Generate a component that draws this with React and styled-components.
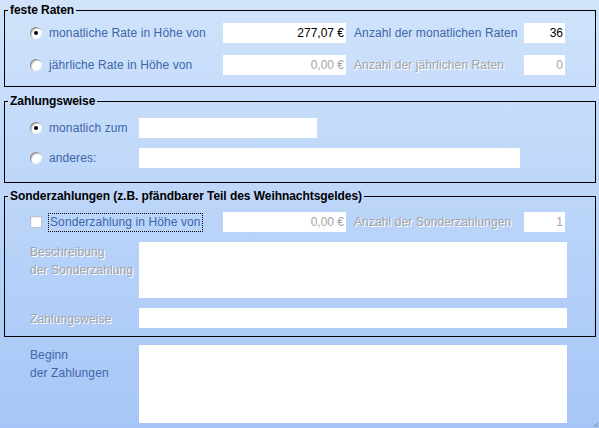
import styled, { createGlobalStyle } from "styled-components";

const Global = createGlobalStyle`
  html, body { margin: 0; padding: 0; }
  body { font-family: "Liberation Sans", Arial, sans-serif; font-size: 12px; }
`;

const Page = styled.div`
  position: relative;
  box-sizing: border-box;
  width: 599px;
  height: 428px;
  padding: 3px 3px 0 4px;
  background: linear-gradient(#d0e3fb, #a6c6f7);
  overflow: hidden;
`;

const Group = styled.fieldset`
  margin: ${(p) => p.$top || 0}px 0 0 0;
  padding: ${(p) => p.$pt}px 0 ${(p) => p.$pb}px 0;
  border: 1px solid #000;
  min-width: 0;
`;

const Legend = styled.legend`
  margin-left: 3px;
  padding: 0 2px;
  font-weight: bold;
  font-size: 12px;
  line-height: 14px;
  letter-spacing: -0.05px;
  color: #000;
`;

const Body = styled.div`
  display: flex;
  flex-direction: column;
  gap: ${(p) => p.$gap}px;
  padding-left: 25px;
`;

const Row = styled.div`
  display: flex;
  align-items: ${(p) => (p.$top ? "flex-start" : "center")};
  height: ${(p) => p.$h || 20}px;
`;

const Option = styled.label`
  display: flex;
  align-items: center;
  width: ${(p) => p.$w}px;
  flex: none;
  color: #4065aa;
`;

const Radio = styled.span`
  position: relative;
  box-sizing: border-box;
  width: 12px;
  height: 12px;
  margin-right: 7px;
  border-radius: 50%;
  background: #fff;
  box-shadow: inset 1px 1px 0 #8a8a8a, inset 2px 2px 0 #d8d8d8, inset -1px -1px 0 #f2f2f2;
  &::after {
    content: "";
    display: ${(p) => (p.$checked ? "block" : "none")};
    position: absolute;
    left: 4px;
    top: 4px;
    width: 4px;
    height: 4px;
    border-radius: 50%;
    background: #000;
  }
`;

const Check = styled.span`
  box-sizing: border-box;
  width: 12px;
  height: 12px;
  margin-right: 6px;
  background: #fff;
  border: 1px solid #b7c3d6;
  box-shadow: inset 1px 1px 0 #eef1f6;
`;

const Text = styled.span`
  color: ${(p) => (p.$off ? "#a4a4a4" : "#4065aa")};
  text-shadow: ${(p) => (p.$off ? "1px 1px 0 #fff" : "none")};
  letter-spacing: 0.1px;
  white-space: nowrap;
`;

const Focus = styled.span`
  padding: 1px 1px 2px 1px;
  border: 1px dotted #000;
  color: #4065aa;
  letter-spacing: 0.1px;
  white-space: nowrap;
`;

const Field = styled.input`
  box-sizing: border-box;
  width: ${(p) => p.$w}px;
  height: 20px;
  margin: 0;
  padding: 0 2px 0 2px;
  border: none;
  outline: none;
  background: #fff;
  font-family: inherit;
  font-size: 12px;
  text-align: ${(p) => (p.$num ? "right" : "left")};
  color: ${(p) => (p.$off ? "#a4a4a4" : "#000")};
`;

const Area = styled.textarea`
  box-sizing: border-box;
  width: 428px;
  height: ${(p) => p.$h}px;
  margin: 0;
  padding: 2px;
  border: none;
  outline: none;
  resize: none;
  background: #fff;
  font-family: inherit;
  font-size: 12px;
`;

const Side = styled.span`
  width: 170px;
  margin-left: 8px;
  flex: none;
  color: ${(p) => (p.$off ? "#a4a4a4" : "#4065aa")};
  text-shadow: ${(p) => (p.$off ? "1px 1px 0 #fff" : "none")};
  letter-spacing: 0.1px;
  white-space: nowrap;
`;

const Caption = styled.div`
  width: 109px;
  flex: none;
  line-height: 18px;
  padding-top: 1px;
  letter-spacing: 0.1px;
  color: ${(p) => (p.$off ? "#a4a4a4" : "#4065aa")};
  text-shadow: ${(p) => (p.$off ? "1px 1px 0 #fff" : "none")};
`;

const Bottom = styled.div`
  display: flex;
  align-items: flex-start;
  margin-top: 8px;
  padding-left: 26px;
`;

const Grip = styled.svg`
  position: absolute;
  right: 0;
  bottom: 0;
`;

export default function App() {
  return (
    <Page>
      <Global />
      <Group $pt={6} $pb={11}>
        <Legend>feste Raten</Legend>
        <Body $gap={12}>
          <Row>
            <Option $w={193}>
              <Radio $checked />
              <Text>monatliche Rate in Höhe von</Text>
            </Option>
            <Field $w={123} $num readOnly value="277,07 €" />
            <Side>Anzahl der monatlichen Raten</Side>
            <Field $w={41} $num readOnly value="36" />
          </Row>
          <Row>
            <Option $w={193}>
              <Radio />
              <Text>jährliche Rate in Höhe von</Text>
            </Option>
            <Field $w={123} $num $off readOnly value="0,00 €" />
            <Side $off>Anzahl der jährlichen Raten</Side>
            <Field $w={41} $num $off readOnly value="0" />
          </Row>
        </Body>
      </Group>

      <Group $top={7} $pt={10} $pb={14}>
        <Legend>Zahlungsweise</Legend>
        <Body $gap={10}>
          <Row>
            <Option $w={109}>
              <Radio $checked />
              <Text>monatlich zum</Text>
            </Option>
            <Field $w={178} readOnly value="" />
          </Row>
          <Row>
            <Option $w={109}>
              <Radio />
              <Text>anderes:</Text>
            </Option>
            <Field $w={381} readOnly value="" />
          </Row>
        </Body>
      </Group>

      <Group $top={6} $pt={9} $pb={8}>
        <Legend>Sonderzahlungen (z.B. pfändbarer Teil des Weihnachtsgeldes)</Legend>
        <Body $gap={10}>
          <Row>
            <Option $w={193}>
              <Check />
              <Focus>Sonderzahlung in Höhe von</Focus>
            </Option>
            <Field $w={123} $num $off readOnly value="0,00 €" />
            <Side $off>Anzahl der Sonderzahlungen</Side>
            <Field $w={41} $num $off readOnly value="1" />
          </Row>
          <Row $top $h={56}>
            <Caption $off>
              Beschreibung
              <br />
              der Sonderzahlung
            </Caption>
            <Area $h={56} readOnly value="" />
          </Row>
          <Row>
            <Caption $off>Zahlungsweise</Caption>
            <Field $w={428} readOnly value="" />
          </Row>
        </Body>
      </Group>

      <Bottom>
        <Caption>
          Beginn
          <br />
          der Zahlungen
        </Caption>
        <Area $h={78} readOnly value="" />
      </Bottom>

      <Grip width="6" height="6" viewBox="0 0 6 6">
        <path d="M5 1 L1 5 M5 3 L3 5" stroke="#8a8a8a" strokeWidth="1" />
      </Grip>
    </Page>
  );
}
